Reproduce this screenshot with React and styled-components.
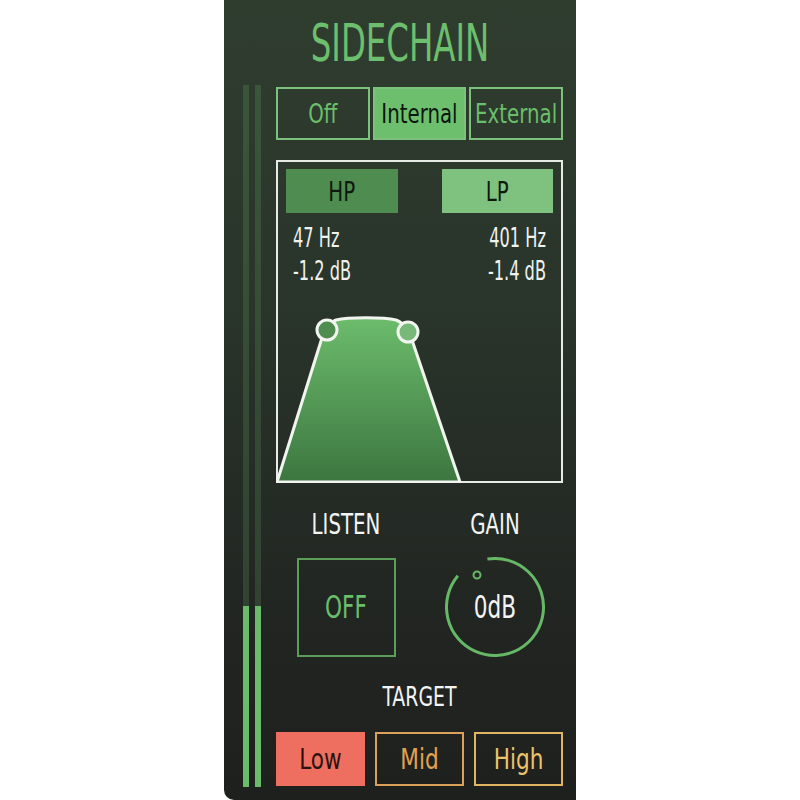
import React from "react";
import styled, { createGlobalStyle } from "styled-components";

const FONT = `"Liberation Sans Narrow", "DejaVu Sans Condensed", "Liberation Sans", sans-serif`;

const GlobalStyle = createGlobalStyle`
  html, body {
    margin: 0;
    padding: 0;
    background: #ffffff;
  }
  * {
    box-sizing: border-box;
  }
  body {
    font-family: ${FONT};
  }
`;

const Panel = styled.div`
  width: 352px;
  height: 800px;
  margin-left: 224px;
  display: flex;
  flex-direction: column;
  border-radius: 0 0 0 10px;
  background: linear-gradient(180deg, #2f3d2f 0%, #29342a 40%, #222622 75%, #1e201e 100%);
`;

// condensed display face: narrow glyphs stretched upward
const Tall = styled.span`
  display: inline-block;
  transform: scaleY(${(p) => p.$k || 1.25});
`;

const Title = styled.h1`
  margin: 0;
  height: 85px;
  display: flex;
  align-items: center;
  justify-content: center;
  font-family: ${FONT};
  font-weight: 400;
  font-size: 36px;
  color: #6cbf6c;
`;

const Body = styled.div`
  flex: 1;
  display: flex;
  gap: 15px;
  padding: 0 13px 13px 19px;
`;

const Meters = styled.div`
  display: flex;
  gap: 6px;
`;

const MeterBar = styled.div`
  width: 6px;
  display: flex;
  flex-direction: column;
  justify-content: flex-end;
  background: linear-gradient(180deg, #3a563a 0%, #334633 60%, #2e3b2e 100%);
`;

const MeterFill = styled.div`
  background: #6abb6a;
`;

const Main = styled.div`
  width: 287px;
  display: flex;
  flex-direction: column;
`;

const ModeRow = styled.div`
  margin-top: 2px;
  display: grid;
  grid-template-columns: repeat(3, 1fr);
  gap: 3px;
`;

const ModeButton = styled.div`
  height: 53px;
  display: flex;
  align-items: center;
  justify-content: center;
  border: 2px solid #7cc27c;
  background: ${(p) => (p.$active ? "#6dbf6d" : "transparent")};
  color: ${(p) => (p.$active ? "#0c160c" : "#6abf6a")};
  font-size: 22px;
`;

const Graph = styled.div`
  position: relative;
  margin-top: 20px;
  height: 323px;
  border: 2px solid #e6ebe6;
  padding: 7px 8px;
`;

const Curve = styled.svg`
  position: absolute;
  left: -2px;
  top: -2px;
  width: 287px;
  height: 323px;
`;

const FilterGrid = styled.div`
  position: relative;
  display: grid;
  grid-template-columns: 1fr 1fr;
  column-gap: 44px;
`;

const FilterCol = styled.div`
  display: flex;
  flex-direction: column;
  text-align: ${(p) => (p.$right ? "right" : "left")};
`;

const FilterButton = styled.div`
  height: 44px;
  display: flex;
  align-items: center;
  justify-content: center;
  background: ${(p) => p.$color};
  color: #0e180e;
  font-size: 22px;
  margin-bottom: 8px;
`;

const Value = styled.div`
  height: 33px;
  line-height: 33px;
  padding: 0 7px;
  color: #f0f2f0;
  font-size: 18px;
`;

const Controls = styled.div`
  display: flex;
  gap: 49px;
  padding-left: 20px;
  margin-top: 30px;
`;

const Control = styled.div`
  width: 100px;
  display: flex;
  flex-direction: column;
  align-items: center;
`;

const Label = styled.div`
  height: 24px;
  line-height: 24px;
  text-align: center;
  color: #f4f4f4;
  font-size: 22px;
`;

const ListenBox = styled.div`
  margin-top: 21px;
  width: 99px;
  height: 99px;
  display: flex;
  align-items: center;
  justify-content: center;
  border: 2px solid #5a9e5a;
  color: #6abf6a;
  font-size: 24px;
`;

const Knob = styled.div`
  margin-top: 20px;
  width: 100px;
  height: 100px;
  display: grid;
  place-items: center;
  > * {
    grid-area: 1 / 1;
  }
`;

const KnobValue = styled.div`
  color: #f4f4f4;
  font-size: 24px;
`;

const TargetLabel = styled(Label)`
  margin-top: 28px;
  font-size: 21px;
`;

const TargetRow = styled.div`
  margin-top: 23px;
  display: grid;
  grid-template-columns: repeat(3, 1fr);
  gap: 10px;
`;

const TargetButton = styled.div`
  height: 54px;
  display: flex;
  align-items: center;
  justify-content: center;
  border: 2px solid ${(p) => p.$border};
  background: ${(p) => (p.$active ? p.$border : "transparent")};
  color: ${(p) => p.$text};
  font-size: 24px;
`;

const meterLevels = [0.258, 0.258];

const modes = ["Off", "Internal", "External"];

const targets = [
  { name: "Low", border: "#ee6e60", text: "#2a1210", active: true },
  { name: "Mid", border: "#d9a15c", text: "#e2a24f" },
  { name: "High", border: "#dfb564", text: "#ecc36a" },
];

const FilterCurve = () => (
  <Curve viewBox="0 0 287 323">
    <defs>
      <linearGradient id="bandFill" x1="0" y1="0" x2="0" y2="1">
        <stop offset="0" stopColor="#6cbc6c" />
        <stop offset="1" stopColor="#3c7640" />
      </linearGradient>
    </defs>
    <path
      d="M 1 322 L 45 181 Q 50 164 60 160 C 72 157 108 157 120 160 Q 131 164 137 183 L 184 322 Z"
      fill="url(#bandFill)"
      stroke="#f2f4f0"
      strokeWidth="3"
      strokeLinejoin="round"
    />
    <circle cx="51" cy="170" r="10" fill="#4f8c4f" stroke="#f2f4f0" strokeWidth="3" />
    <circle cx="132" cy="172" r="10" fill="#78b878" stroke="#f2f4f0" strokeWidth="3" />
  </Curve>
);

const GainKnob = () => (
  <Knob>
    <svg width="100" height="100" viewBox="0 0 100 100">
      <path
        d="M 42.41 2.1 A 48.5 48.5 0 1 1 12.85 18.82"
        fill="none"
        stroke="#66b866"
        strokeWidth="3"
      />
      <circle cx="32" cy="18" r="3.5" fill="none" stroke="#66b866" strokeWidth="2" />
    </svg>
    <KnobValue>
      <Tall $k={1.35}>0dB</Tall>
    </KnobValue>
  </Knob>
);

const App = () => {
  return (
    <>
      <GlobalStyle />
      <Panel>
        <Title>
          <Tall $k={1.45}>SIDECHAIN</Tall>
        </Title>
        <Body>
          <Meters>
            {meterLevels.map((level, i) => (
              <MeterBar key={i}>
                <MeterFill style={{ height: `${level * 100}%` }} />
              </MeterBar>
            ))}
          </Meters>
          <Main>
            <ModeRow>
              {modes.map((m) => (
                <ModeButton key={m} $active={m === "Internal"}>
                  <Tall $k={1.2}>{m}</Tall>
                </ModeButton>
              ))}
            </ModeRow>

            <Graph>
              <FilterCurve />
              <FilterGrid>
                <FilterCol>
                  <FilterButton $color="#4f8c4f">
                    <Tall $k={1.22}>HP</Tall>
                  </FilterButton>
                  <Value>
                    <Tall $k={1.45}>47 Hz</Tall>
                  </Value>
                  <Value>
                    <Tall $k={1.45}>-1.2 dB</Tall>
                  </Value>
                </FilterCol>
                <FilterCol $right>
                  <FilterButton $color="#7fc27f">
                    <Tall $k={1.22}>LP</Tall>
                  </FilterButton>
                  <Value>
                    <Tall $k={1.45}>401 Hz</Tall>
                  </Value>
                  <Value>
                    <Tall $k={1.45}>-1.4 dB</Tall>
                  </Value>
                </FilterCol>
              </FilterGrid>
            </Graph>

            <Controls>
              <Control>
                <Label>
                  <Tall $k={1.25}>LISTEN</Tall>
                </Label>
                <ListenBox>
                  <Tall $k={1.3}>OFF</Tall>
                </ListenBox>
              </Control>
              <Control>
                <Label>
                  <Tall $k={1.25}>GAIN</Tall>
                </Label>
                <GainKnob />
              </Control>
            </Controls>

            <TargetLabel>
              <Tall $k={1.3}>TARGET</Tall>
            </TargetLabel>
            <TargetRow>
              {targets.map((t) => (
                <TargetButton key={t.name} $border={t.border} $text={t.text} $active={t.active}>
                  <Tall $k={1.2}>{t.name}</Tall>
                </TargetButton>
              ))}
            </TargetRow>
          </Main>
        </Body>
      </Panel>
    </>
  );
};

export default App;
